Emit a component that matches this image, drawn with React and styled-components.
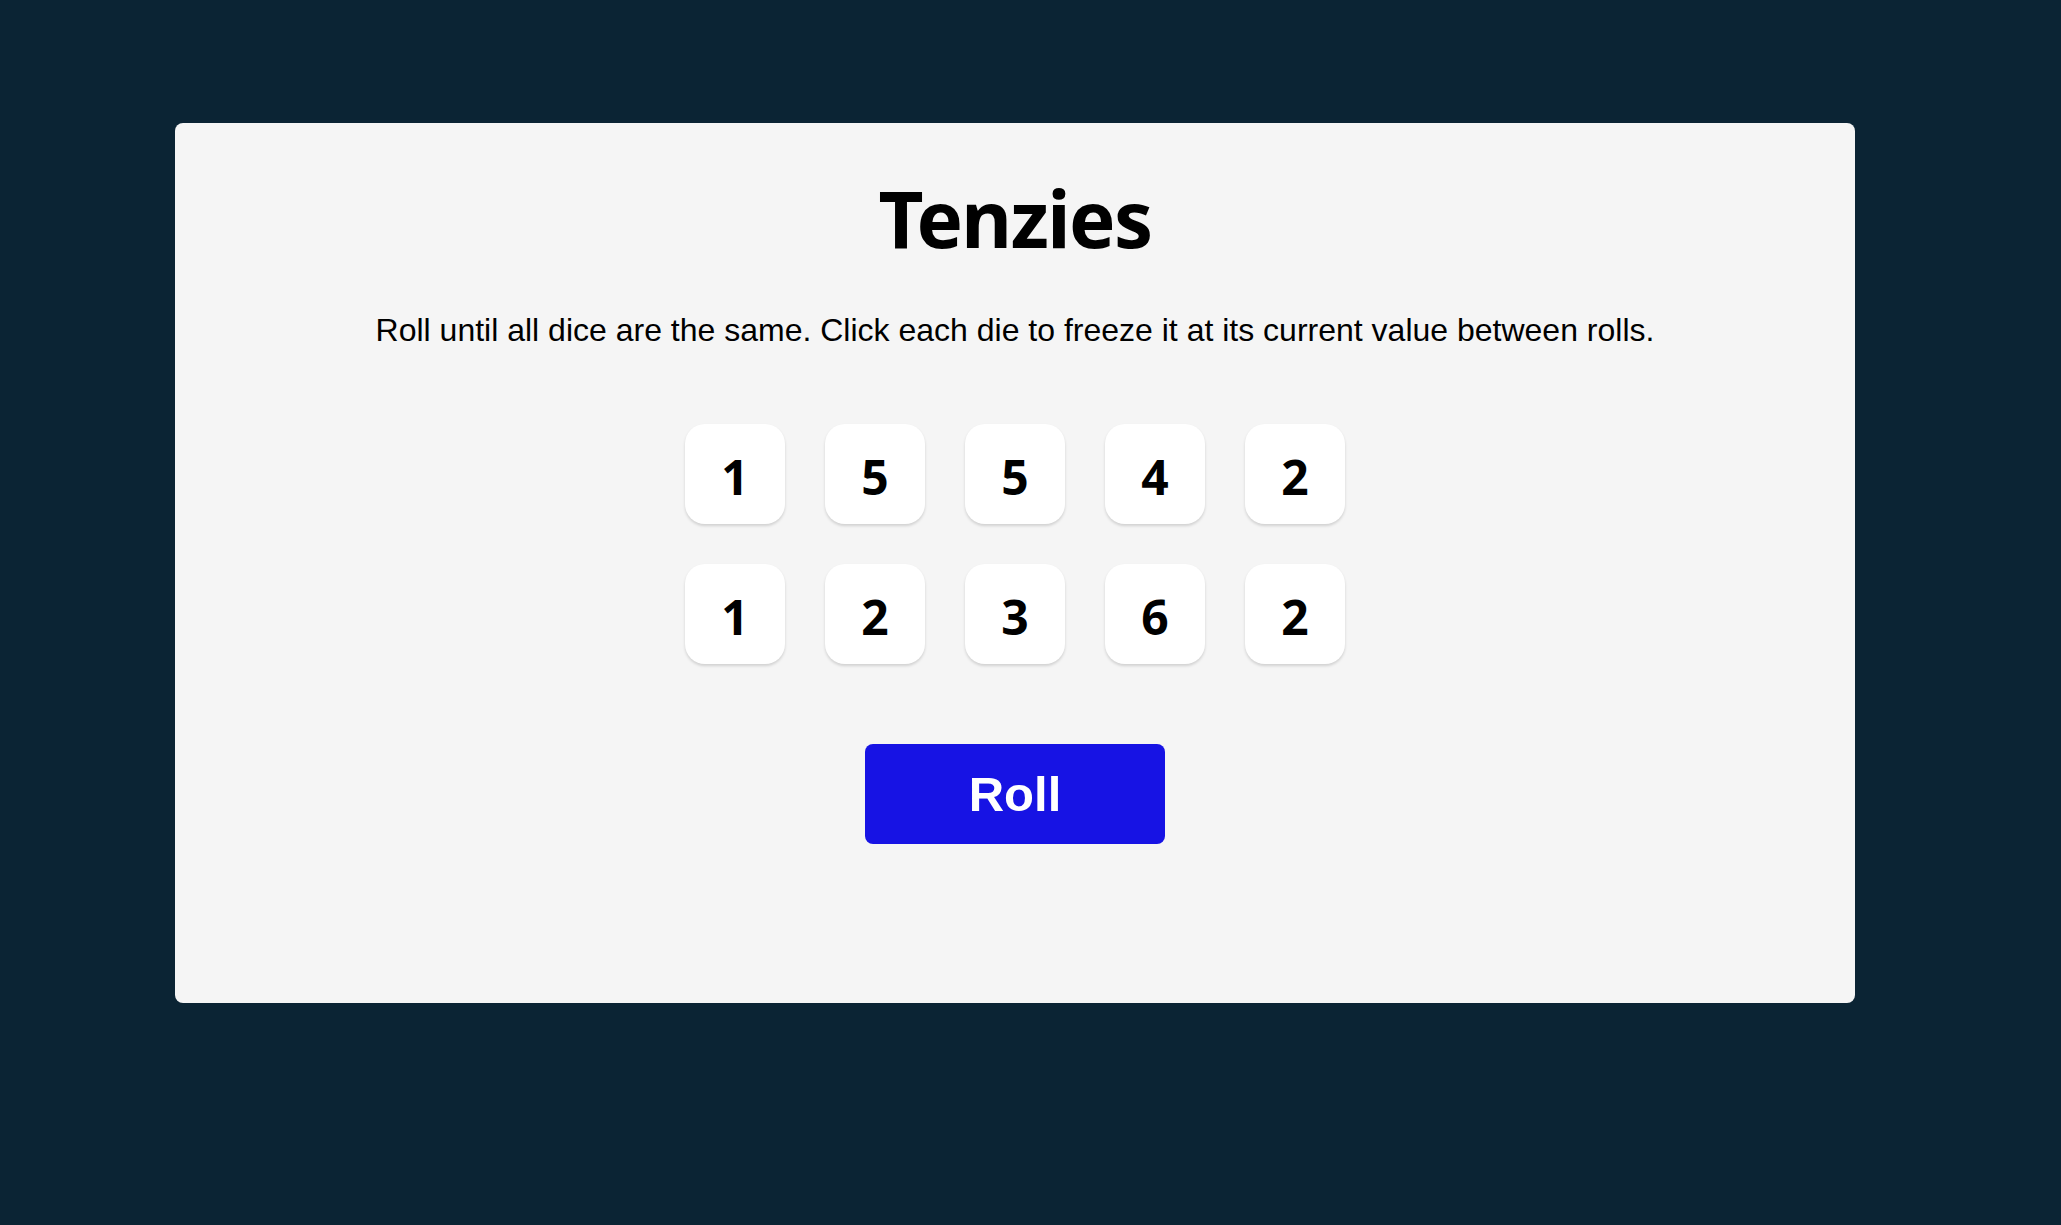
import React from "react";
import styled, { createGlobalStyle } from "styled-components";

const Global = createGlobalStyle`
  html, body { margin: 0; padding: 0; }
  body {
    background: #0b2434;
    min-height: 1225px;
    font-family: "Liberation Sans", Arial, sans-serif;
  }
`;

const Page = styled.div`
  padding: 123px 0 0 175px;
`;

const Card = styled.main`
  box-sizing: border-box;
  width: 1680px;
  height: 880px;
  background: #f5f5f5;
  border-radius: 8px;
  padding-top: 47px;
  display: flex;
  flex-direction: column;
  align-items: center;
`;

const Title = styled.h1`
  margin: 0;
  font-family: "Noto Sans", "Open Sans", sans-serif;
  font-weight: 700;
  font-size: 78px;
  line-height: 96px;
  letter-spacing: -1.6px;
  color: #000;
`;

const Instructions = styled.p`
  margin: 44px 0 0;
  font-family: "Liberation Sans", Arial, sans-serif;
  font-size: 32px;
  line-height: 40px;
  color: #000;
  text-align: center;
`;

const DiceGrid = styled.div`
  margin-top: 74px;
  display: grid;
  grid-template-columns: repeat(5, 100px);
  grid-auto-rows: 100px;
  gap: 40px;
`;

const Die = styled.button`
  border: none;
  border-radius: 20px;
  background: ${(p) => (p.$held ? "#59e391" : "#ffffff")};
  box-shadow: 0 2px 3px rgba(0, 0, 0, 0.15);
  font-family: "Noto Sans", "Open Sans", sans-serif;
  font-weight: 700;
  font-size: 48px;
  color: #000;
  padding: 4px 0 0;
  display: flex;
  align-items: center;
  justify-content: center;
  cursor: pointer;
`;

const RollButton = styled.button`
  margin-top: 80px;
  width: 300px;
  height: 100px;
  border: none;
  border-radius: 8px;
  background: #1713e4;
  color: #fff;
  font-family: "Liberation Sans", Arial, sans-serif;
  font-weight: 700;
  font-size: 49px;
  cursor: pointer;
`;

const dice = [1, 5, 5, 4, 2, 1, 2, 3, 6, 2];

export default function App() {
  return (
    <>
      <Global />
      <Page>
        <Card>
          <Title>Tenzies</Title>
          <Instructions>
            Roll until all dice are the same. Click each die to freeze it at its current value between rolls.
          </Instructions>
          <DiceGrid>
            {dice.map((v, i) => (
              <Die key={i}>{v}</Die>
            ))}
          </DiceGrid>
          <RollButton>Roll</RollButton>
        </Card>
      </Page>
    </>
  );
}
